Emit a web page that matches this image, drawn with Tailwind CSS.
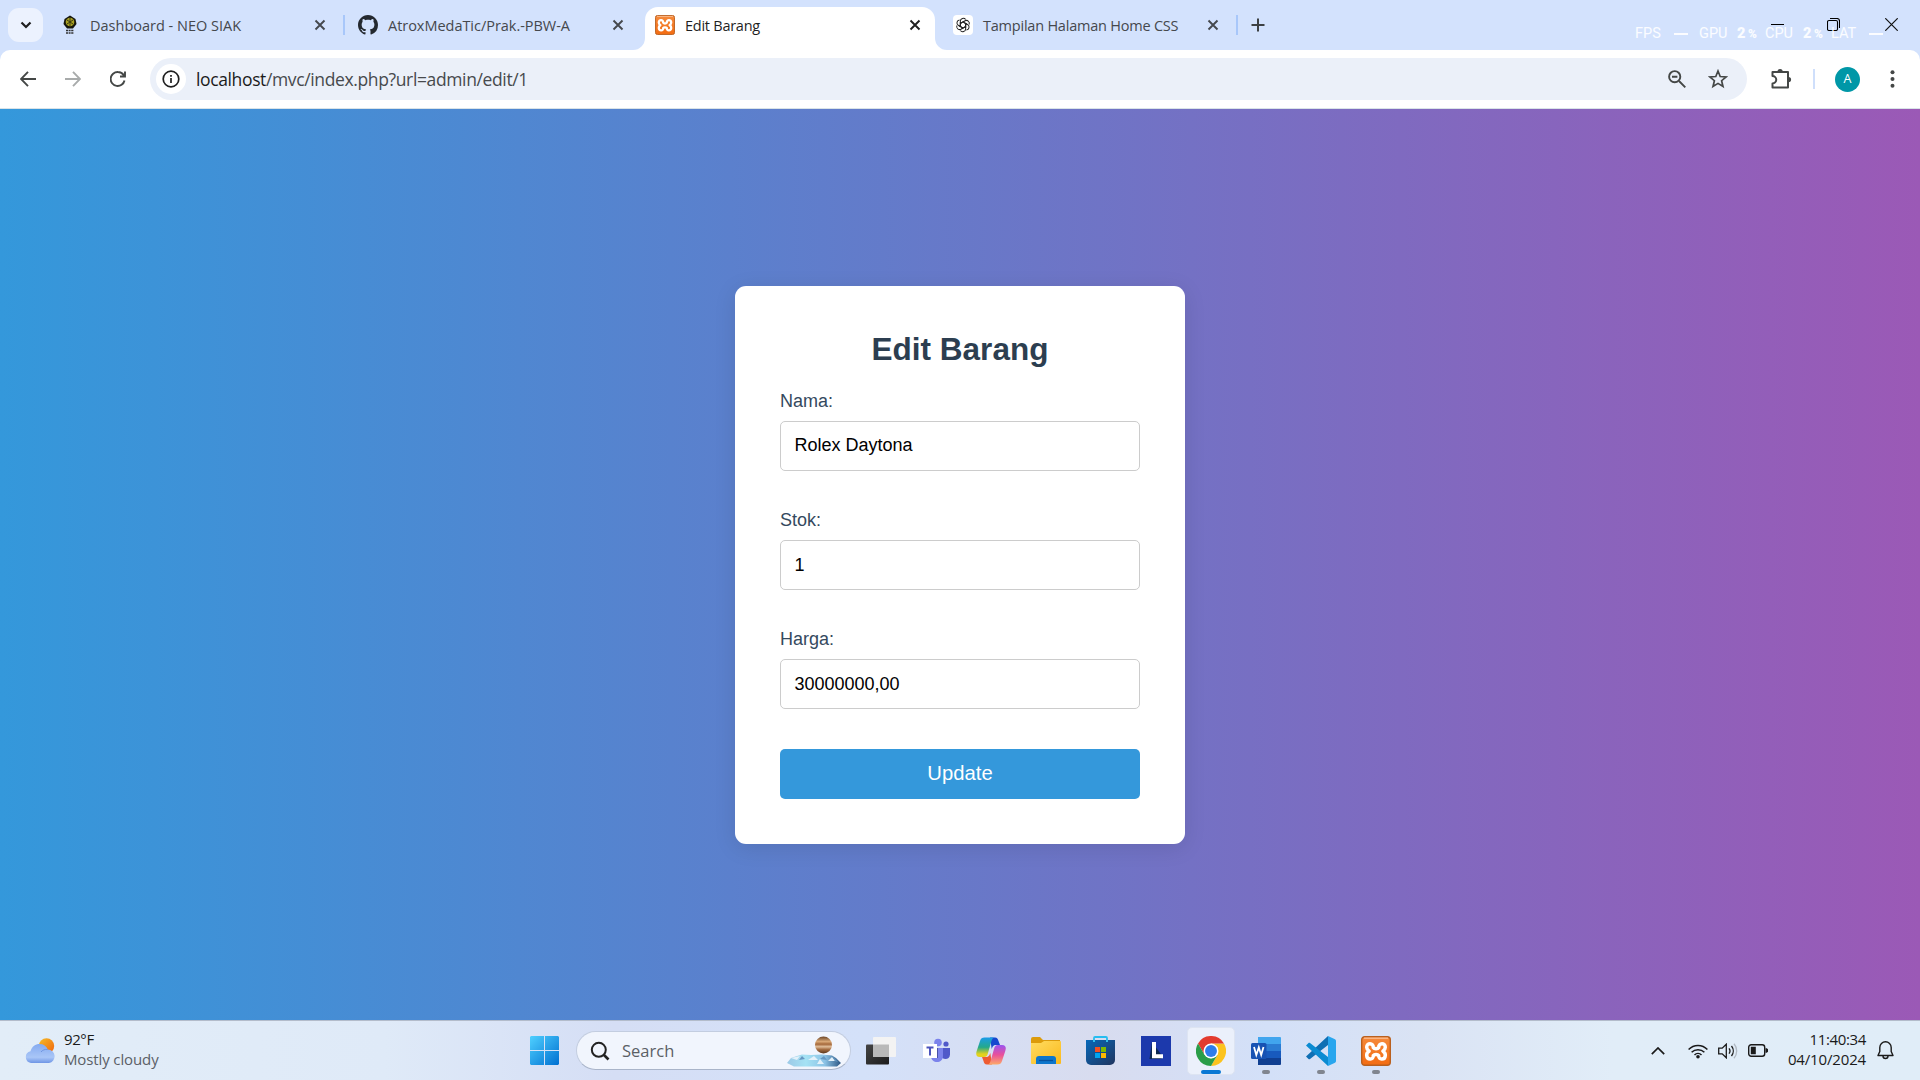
<!DOCTYPE html>
<html lang="id">
<head>
<meta charset="utf-8">
<title>Edit Barang</title>
<script src="https://cdn.jsdelivr.net/npm/@tailwindcss/browser@4"></script>
</head>
<body class="w-[1920px] h-[1080px] overflow-hidden flex flex-col font-['Open_Sans','Noto_Sans',sans-serif] bg-[#d3e2fd]">

<!-- shared symbols -->
<svg class="absolute w-0 h-0">
  <defs><linearGradient id="xg" x1="0" y1="0" x2="0" y2="1"><stop offset="0" stop-color="#f58a3c"/><stop offset="1" stop-color="#f36c12"/></linearGradient></defs>
  <symbol id="x" viewBox="0 0 12 12"><path d="M1.5 1.5l9 9M10.5 1.5l-9 9" stroke="currentColor" stroke-width="1.9" fill="none"/></symbol>
  <symbol id="xampp" viewBox="0 0 30 30">
    <rect x=".7" y=".7" width="28.6" height="28.6" rx="3" fill="url(#xg)" stroke="#b9601f" stroke-width="1.4"/>
    <path d="M3 2.200h24" stroke="#fbb98a" stroke-width="1.400"/>
    <path d="M12.300 11.500C12.500 6.500 5.700 6.500 5.700 11.200c0 2 1 3 2.400 4C6.300 16.200 5.500 17.500 5.700 19.500c.4 5 7.100 4.500 6.600 0 1-1.300 4.400-1.300 5.400 0-.5 4.500 6.200 5 6.600 0 .2-2-.6-3.300-2.400-4.300 1.400-1 2.400-2 2.400-4 0-4.700-6.800-4.700-6.600.3-1 1.600-4.400 1.600-5.400 0z" fill="none" stroke="#fff" stroke-width="3.500" stroke-linejoin="round"/>
  </symbol>
</svg>

<!-- tab strip -->
<header class="h-[50px] shrink-0 flex items-start relative text-[14.5px] text-[#45484d]">
  <div class="ml-2 mt-2 w-[35px] h-[34px] rounded-[11px] bg-[#ecf2fe] flex items-center justify-center shrink-0">
    <svg class="w-3 h-3" viewBox="0 0 12 12"><path d="M1.500 3.500L6 8l4.500-4.500" fill="none" stroke="#1f1f1f" stroke-width="2.200"/></svg>
  </div>
  <div class="w-[302px] h-[50px] pl-[17px] pr-[19px] flex items-center shrink-0">
    <svg class="w-5 h-5" viewBox="0 0 20 20"><path d="M10 .5l5.500 3.500 1 5-3.500 4.500H7L3.500 9l1-5z" fill="#15150c"/><circle cx="10" cy="7" r="4.300" fill="#a8a021"/><path d="M10 3v8M7 5l6 4M13 5L7 9" stroke="#39380f"/><path d="M6 15.500h8M6 18h8" stroke="#333" stroke-width="1.600" stroke-dasharray="2 .6"/></svg>
    <span class="ml-[10px] w-[151px] whitespace-nowrap pt-[2px]">Dashboard - NEO SIAK</span>
    <svg class="ml-auto w-3 h-3"><use href="#x"/></svg>
  </div>
  <div class="w-[2px] h-5 mt-[15px] -ml-[2px] bg-[#a8c7fa] shrink-0"></div>
  <div class="w-[300px] h-[50px] pl-[13px] pr-[21px] flex items-center shrink-0">
    <svg class="w-5 h-5" viewBox="0 0 16 16"><path fill="#24292f" d="M8 0C3.580 0 0 3.580 0 8c0 3.540 2.290 6.530 5.470 7.590.4.070.55-.17.55-.38 0-.19-.01-.82-.01-1.490-2.010.37-2.530-.49-2.690-.94-.09-.23-.48-.94-.82-1.130-.28-.15-.68-.52-.01-.53.63-.01 1.080.58 1.230.82.72 1.210 1.870.87 2.330.66.070-.52.28-.87.51-1.070-1.780-.2-3.640-.89-3.640-3.950 0-.87.31-1.590.82-2.150-.08-.2-.36-1.020.08-2.120 0 0 .67-.21 2.200.82.64-.18 1.320-.27 2-.27s1.360.09 2 .27c1.530-1.040 2.200-.82 2.200-.82.44 1.100.16 1.920.08 2.120.51.56.82 1.270.82 2.150 0 3.070-1.870 3.750-3.650 3.950.29.25.54.73.54 1.480 0 1.070-.01 1.930-.01 2.200 0 .21.15.46.55.38A8.010 8.010 0 0016 8c0-4.420-3.580-8-8-8z"/></svg>
    <span class="ml-[10px] whitespace-nowrap pt-[2px] tracking-[-0.03px]">AtroxMedaTic/Prak.-PBW-A</span>
    <svg class="ml-auto w-3 h-3"><use href="#x"/></svg>
  </div>
  <div class="w-[290px] h-[43px] mt-[7px] rounded-t-[13px] bg-white pl-[10px] pr-[14px] flex items-center pb-[7px] relative shrink-0 text-[#1f1f1f]">
    <svg class="absolute -left-3 bottom-0 w-3 h-3" viewBox="0 0 12 12"><path d="M12 0v12H0A12 12 0 0012 0z" fill="#fff"/></svg>
    <svg class="absolute -right-3 bottom-0 w-3 h-3" viewBox="0 0 12 12"><path d="M0 0v12h12A12 12 0 010 0z" fill="#fff"/></svg>
    <svg class="w-5 h-5"><use href="#xampp"/></svg>
    <span class="ml-[10px] whitespace-nowrap pt-[2px] tracking-[-0.250px]">Edit Barang</span>
    <svg class="ml-auto w-3 h-3"><use href="#x"/></svg>
  </div>
  <div class="w-[301px] h-[50px] pl-[18px] pr-[17px] flex items-center shrink-0">
    <svg class="w-5 h-5" viewBox="0 0 20 20"><rect width="20" height="20" rx="4" fill="#fff"/><g transform="translate(1.200 1.200) scale(.88)" fill="none" stroke="#222" stroke-width="1.150"><path id="k" d="M7 8.300V5.500a3.300 3.300 0 016-1.700M7 8.300l3-1.800 4.500 2.600"/><use href="#k" transform="rotate(60 10 10)"/><use href="#k" transform="rotate(120 10 10)"/><use href="#k" transform="rotate(180 10 10)"/><use href="#k" transform="rotate(240 10 10)"/><use href="#k" transform="rotate(300 10 10)"/></g></svg>
    <span class="ml-[10px] whitespace-nowrap pt-[2px] tracking-[-0.220px]">Tampilan Halaman Home CSS</span>
    <svg class="ml-auto w-3 h-3"><use href="#x"/></svg>
  </div>
  <div class="w-[2px] h-5 mt-[15px] bg-[#a8c7fa] shrink-0"></div>
  <svg class="w-[14px] h-[14px] mt-[18px] ml-[13px]" viewBox="0 0 14 14"><path d="M7 .5v13M.5 7h13" stroke="#3c4043" stroke-width="2"/></svg>
  <div class="ml-auto h-[49px] flex items-center shrink-0 text-black pr-[22px]">
    <svg class="w-[13px] h-[13px]" viewBox="0 0 13 13"><path d="M0 6.500h13" stroke="#000"/></svg>
    <svg class="w-[13px] h-[13px] ml-[43px]" viewBox="0 0 13 13"><path d="M.5 4a1.500 1.500 0 011.500-1.500h7A1.500 1.500 0 0110.500 4v7A1.500 1.500 0 019 12.500H2A1.500 1.500 0 01.5 11zM3 .5h7a2.500 2.500 0 012.500 2.500v7" fill="none" stroke="#000" stroke-width="1.100"/></svg>
    <svg class="w-[13px] h-[13px] ml-[45px]" viewBox="0 0 13 13"><path d="M.3.3l12.400 12.400M12.700.3L.3 12.700" stroke="#111" stroke-width="1.200"/></svg>
  </div>
  <!-- performance overlay -->
  <div class="absolute left-[1635px] top-[25px] w-[250px] h-[18px] leading-[18px] flex items-center whitespace-nowrap text-white/90 text-[14.500px] font-['Roboto',sans-serif]">
    <span class="w-[39px]">FPS</span><span class="w-[14px] h-[2px] bg-white/90 mr-[11px]"></span>
    <span class="w-[38px]">GPU</span><span class="w-[28px] font-black">2 <span class="text-[12px] -ml-px">%</span></span>
    <span class="w-[38px]">CPU</span><span class="w-[28px] font-black">2 <span class="text-[12px] -ml-px">%</span></span>
    <span class="w-[38px]">LAT</span><span class="w-[14px] h-[2px] bg-white/90"></span>
  </div>
</header>

<!-- toolbar -->
<div class="h-[59px] shrink-0 bg-white rounded-t-[10px] border-b border-[#d9e3e8] flex items-center">
  <svg class="ml-5 w-4 h-4" viewBox="0 0 16 16"><path d="M8 .8L1 8l7 7.200M1 8h15" fill="none" stroke="#444746" stroke-width="1.900"/></svg>
  <svg class="ml-[29px] w-4 h-4" viewBox="0 0 16 16"><path d="M8 .8L15 8l-7 7.200M15 8H0" fill="none" stroke="#a8abab" stroke-width="1.900"/></svg>
  <svg class="ml-[29px] w-4 h-4" viewBox="0 0 16 16"><path d="M14.500 9.500A7 7 0 118 1a7 7 0 015.800 3.200M15 .5v5h-5" fill="none" stroke="#444746" stroke-width="1.900"/></svg>
  <div class="ml-[24px] w-[1597px] h-[42px] rounded-full bg-[#ebf0f9] flex items-center pl-[6px] pr-[19px]">
    <div class="w-[30px] h-[30px] rounded-full bg-white flex items-center justify-center">
      <svg class="w-[18px] h-[18px]" viewBox="0 0 18 18"><circle cx="9" cy="9" r="7.800" fill="none" stroke="#1f1f1f" stroke-width="1.700"/><path d="M9 8v5M9 5v1.700" stroke="#1f1f1f" stroke-width="1.700"/></svg>
    </div>
    <span class="ml-[10px] text-[17.500px] tracking-[-0.370px] text-[#474a4d] whitespace-nowrap pt-px"><span class="text-[#1b1b1b]">localhost</span>/mvc/index.php?url=admin/edit/1</span>
    <svg class="ml-auto w-[18px] h-[18px]" viewBox="0 0 18 18"><circle cx="6.700" cy="6.700" r="5.600" fill="none" stroke="#444746" stroke-width="1.900"/><path d="M11 11l6.300 6.300M4 6.700h5.400" stroke="#444746" stroke-width="1.900"/></svg>
    <svg class="ml-[22px] w-5 h-5" viewBox="0 0 20 20"><path d="M10 2l2.200 5.500 5.900.4-4.500 3.800 1.400 5.800-5-3.100-5 3.100 1.400-5.800L1.900 7.900l5.900-.4z" fill="none" stroke="#444746" stroke-width="1.700"/></svg>
  </div>
  <svg class="ml-[23px] w-[22px] h-[22px]" viewBox="0 0 22 22"><path d="M2.500 4h15.500v15.500H2.500v-4a3.200 3.200 0 000-7.500z" fill="none" stroke="#444746" stroke-width="2" stroke-linejoin="round"/><path d="M7.500 3.500a2.600 2.600 0 015.200 0zM18.500 9a2.600 2.600 0 010 5.200z" fill="#444746"/></svg>
  <div class="ml-[21px] w-[2px] h-5 bg-[#cfdffb]"></div>
  <div class="ml-5 w-[25px] h-[25px] rounded-full bg-[#0097a7] text-white text-[12.500px] flex items-center justify-center">A</div>
  <svg class="ml-[30px] w-[5px] h-[18px]" viewBox="0 0 5 18"><g fill="#444746"><circle cx="2.500" cy="2.200" r="2"/><circle cx="2.500" cy="9" r="2"/><circle cx="2.500" cy="15.800" r="2"/></g></svg>
</div>

<!-- page -->
<main class="h-[911px] shrink-0 bg-linear-[90deg,#3498db,#9b59b6] flex justify-center items-start font-['Liberation_Sans',Arial,sans-serif]">
  <form class="mt-[177px] w-[450px] h-[558px] rounded-[11px] bg-white p-[45px] shadow-[0_4px_22px_rgba(0,0,0,0.1)] flex flex-col text-lg text-[#34495e]">
    <h1 class="h-9 leading-9 text-[31.500px] font-bold text-[#2c3e50] text-center">Edit Barang</h1>
    <label class="mt-[22px] h-6 leading-6">Nama:</label>
    <div class="mt-2 h-[50px] rounded-[5px] border border-[#ccc] px-[13.500px] leading-[46px] text-black">Rolex Daytona</div>
    <label class="mt-[37px] h-6 leading-6">Stok:</label>
    <div class="mt-2 h-[50px] rounded-[5px] border border-[#ccc] px-[13.500px] leading-[48px] text-black">1</div>
    <label class="mt-[37px] h-6 leading-6">Harga:</label>
    <div class="mt-2 h-[50px] rounded-[5px] border border-[#ccc] px-[13.500px] leading-[48px] text-black">30000000,00</div>
    <button type="button" class="mt-10 h-[50px] rounded-[5px] bg-[#3498db] text-white text-[20.250px] leading-[48px] pb-[2px]">Update</button>
  </form>
</main>

<!-- taskbar -->
<footer class="h-[60px] shrink-0 border-t border-[#b3bccb] bg-linear-[90deg,#e2edf8_0%,#dfeaf8_20%,#d5def5_32%,#d4e1f9_45%,#d8dcef_57%,#d3e0f8_66%,#dae3f4_74%,#e1edf8_84%,#e0edf8_100%] flex items-center">
  <div class="w-[528px] pl-[25px] flex items-center shrink-0">
    <svg class="w-[30px] h-[26px]" viewBox="0 0 30 26">
      <defs><linearGradient id="sun" x1="0" y1="0" x2="1" y2="1"><stop offset="0" stop-color="#f5bd28"/><stop offset="1" stop-color="#f0620c"/></linearGradient><linearGradient id="cl" x1="0" y1="0" x2="0" y2="1"><stop offset="0" stop-color="#85aaf0"/><stop offset=".7" stop-color="#a9c6f7"/><stop offset="1" stop-color="#6e95e5"/></linearGradient></defs>
      <circle cx="21.500" cy="8" r="7.700" fill="url(#sun)"/><path d="M6 25a6 6 0 01-.5-11.800C7 8.500 10.500 6 14.500 6c4 0 7 2 8.300 5.500A6.800 6.800 0 0124 25z" fill="url(#cl)"/><path d="M16 14c1.500-2 4-3 6.800-2.500" fill="none" stroke="#7096e0"/>
    </svg>
    <div class="ml-[9px] pb-1 text-[15px] leading-5 whitespace-nowrap"><div class="text-[#1a1a1a] tracking-[-0.400px]">92°F</div><div class="text-[#5b6067] tracking-[-0.120px]">Mostly cloudy</div></div>
  </div>
  <svg class="ml-[2px] w-[29px] h-[29px] shrink-0" viewBox="0 0 29 29"><defs><linearGradient id="w" x1="0" y1="0" x2="1" y2="1"><stop offset="0" stop-color="#4fd0ff"/><stop offset="1" stop-color="#0070d1"/></linearGradient></defs><path d="M1 0h13v14H0V1zM15 0h13l1 1v13H15zM0 15h14v14H1l-1-1zM15 15h14v13l-1 1H15z" fill="url(#w)"/></svg>
  <div class="ml-[17px] w-[275px] h-[39px] rounded-full bg-[#f1f5fd] border border-[#c3cde0] border-b-[#a9b4c9] flex items-center pl-[13px] pr-[8px] shrink-0">
    <svg class="w-5 h-5" viewBox="0 0 20 20"><circle cx="8.800" cy="8.800" r="7" fill="none" stroke="#222" stroke-width="2"/><path d="M14 14l4.500 4.500" stroke="#222" stroke-width="2.600"/></svg>
    <span class="ml-3 text-[16.500px] text-[#5b5f66] pt-px">Search</span>
    <svg class="ml-auto w-[56px] h-[34px]" viewBox="0 0 56 34">
      <defs><linearGradient id="pl" x1="0" y1="0" x2="0" y2="1"><stop offset="0" stop-color="#6a4426"/><stop offset=".3" stop-color="#d9a877"/><stop offset=".45" stop-color="#a5683a"/><stop offset=".6" stop-color="#dfbd9a"/><stop offset=".75" stop-color="#a87044"/><stop offset="1" stop-color="#59361d"/></linearGradient><linearGradient id="ice" x1="0" y1="0" x2="1" y2="0"><stop offset="0" stop-color="#9cc9e6"/><stop offset=".35" stop-color="#a5e2f4"/><stop offset=".7" stop-color="#8cc3e6"/><stop offset="1" stop-color="#2c5683"/></linearGradient></defs>
      <path d="M1 29l4-5 6-2 5-1.500 9 .5 11-.5 10 1 4 2.500 5 5-4 3.500H8z" fill="url(#ice)"/><path d="M5 24l6 2 3-4zM22 26l6-4 4 4zM31 30l3-5 4 5zM42 27l4-4 3 4z" fill="#e3f1fa"/><path d="M13 26l3-4 3 3zM34 25l4-3 3 4zM47 23l2 4 3 1z" fill="#6597c2"/>
      <circle cx="37.500" cy="11" r="8.500" fill="url(#pl)"/>
    </svg>
  </div>
  <div class="ml-[2px] flex h-full shrink-0">
    <div class="w-[55px] flex items-center justify-center">
      <svg class="w-[30px] h-[30px]" viewBox="0 0 30 30"><defs><linearGradient id="tv" x1="0" y1="0" x2="1" y2="1"><stop offset="0" stop-color="#444"/><stop offset="1" stop-color="#1c1c1c"/></linearGradient></defs><rect y="8.500" width="23" height="20" rx="1" fill="url(#tv)"/><rect x="7" y="1" width="23" height="20" rx="1" fill="#f3f3f3"/><path d="M7 8.500h16V21H7z" fill="#b9b9b9"/></svg>
    </div>
    <div class="w-[55px] flex items-center justify-center">
      <svg class="w-[28px] h-[26px]" viewBox="0 0 28 26"><circle cx="16" cy="4.500" r="3.800" fill="#7b83eb"/><circle cx="24" cy="6" r="2.600" fill="#5059c9"/><path d="M19 10h9v6.500c0 6-9 6-9 0z" fill="#5059c9"/><path d="M9 10h12v8c0 8-12 8-12 0z" fill="#7b83eb"/><path d="M9 10h7v10H9z" fill="#4a52a8"/><path d="M1 6h14v14H1z" fill="#fff"/><path d="M4.500 9.500h7M8 9.500v8" stroke="#4b53bc" stroke-width="2"/></svg>
    </div>
    <div class="w-[55px] flex items-center justify-center">
      <svg class="w-[30px] h-[28px]" viewBox="0 0 30 28"><defs><linearGradient id="c1" x1="0" y1="0" x2="0" y2="1"><stop offset="0" stop-color="#1b9be8"/><stop offset=".5" stop-color="#24a98a"/><stop offset=".85" stop-color="#e4d21c"/></linearGradient><linearGradient id="c2" x1="0" y1="0" x2="0" y2="1"><stop offset="0" stop-color="#9a55f0"/><stop offset=".5" stop-color="#e9509b"/><stop offset="1" stop-color="#fdaa68"/></linearGradient></defs><path d="M14 .5h5c2.200 0 2.800 1.500 3.500 3.500L24 8h-4c-3 0-3.500 2-4.300 4z" fill="#1647cf"/><path d="M16 27.500h-5c-2.500 0-2.800-1.500-3.500-3.500L6 20h4c3 0 3.500-2 4.300-4z" fill="#ee5b32"/><path d="M8.500.5H19c-2.500 0-3.200 2-4 5l-3 10.500c-.8 3-1.700 4-4 4H4c-4 0-4.300-3-3.300-6L4 4C5 1.300 6 .5 8.500.5z" fill="url(#c1)"/><path d="M21.500 27.500H11c2.500 0 3.200-2 4-5L18 12c.8-3 1.700-4 4-4h4c4 0 4.300 3 3.300 6L26 24c-1 2.700-2 3.500-4.500 3.500z" fill="url(#c2)"/></svg>
    </div>
    <div class="w-[55px] flex items-center justify-center">
      <svg class="w-[30px] h-[27px]" viewBox="0 0 30 27"><defs><linearGradient id="fo" x1="0" y1="0" x2="1" y2="1"><stop offset="0" stop-color="#ffdc62"/><stop offset="1" stop-color="#fbb91b"/></linearGradient></defs><path d="M0 2a2 2 0 012-2h7l3 3h17v8H0z" fill="#dc9b0b"/><path d="M0 6h10l3-2h16a1 1 0 011 1v21a1 1 0 01-1 1H1a1 1 0 01-1-1z" fill="url(#fo)"/><path d="M5 27v-5a3 3 0 013-3h14a3 3 0 013 3v5z" fill="#0d76cc"/><path d="M8 23.500h14" stroke="#07529d" stroke-width="1.300"/></svg>
    </div>
    <div class="w-[55px] flex items-center justify-center">
      <svg class="w-[29px] h-[29px]" viewBox="0 0 29 29"><defs><linearGradient id="st" x1="0" y1="0" x2="1" y2="1"><stop offset="0" stop-color="#0768b9"/><stop offset="1" stop-color="#21355f"/></linearGradient></defs><path d="M8 6V2a1 1 0 011-1h11a1 1 0 011 1v4" fill="none" stroke="#27bdf0" stroke-width="1.800"/><path d="M0 4h29v20a5 5 0 01-5 5H5a5 5 0 01-5-5z" fill="url(#st)"/><path d="M8 4v2M21 4v2" stroke="#35c9f6" stroke-width="1.800"/><path d="M9 11h5v5H9z" fill="#f25022"/><path d="M15 11h5v5h-5z" fill="#7fba00"/><path d="M9 17h5v5H9z" fill="#00a4ef"/><path d="M15 17h5v5h-5z" fill="#ffb900"/></svg>
    </div>
    <div class="w-[55px] flex items-center justify-center">
      <svg class="w-[30px] h-[30px]" viewBox="0 0 30 30"><path d="M0 0h30v30H0z" fill="#1c39ac"/><path d="M11 6l-2.500 17H20l2-2z" fill="#0b2850"/><path d="M13 6v14.200h9" fill="none" stroke="#fff" stroke-width="4"/></svg>
    </div>
    <div class="w-[55px] flex items-center justify-center">
      <div class="w-12 h-12 rounded-[5px] bg-[#ebf0fb] border border-[#dde4f2] relative flex items-center justify-center">
        <svg class="w-[30px] h-[30px]" viewBox="0 0 48 48"><path d="M44.800 12A24 24 0 0124 48l10.400-18L34.400 18 24 12z" fill="#fcc31e"/><path d="M3.200 12A24 24 0 0144.800 12H24L13.600 30z" fill="#e33b2e"/><path d="M3.200 12L13.600 30 24 36l10.400-6L24 48A24 24 0 013.200 12z" fill="#2a9d48"/><circle cx="24" cy="24" r="12" fill="#fff"/><circle cx="24" cy="24" r="9.500" fill="#2f7de9"/></svg>
        <div class="absolute left-[13px] bottom-0 w-5 h-1 rounded-full bg-[#0a78d4]"></div>
      </div>
    </div>
    <div class="w-[55px] flex items-center justify-center relative">
      <svg class="w-[30px] h-[28px]" viewBox="0 0 30 28"><path d="M7 0h22a1 1 0 011 1v6H7z" fill="#41a5ee"/><path d="M7 7h23v7H7z" fill="#2b7cd3"/><path d="M7 14h23v7H7z" fill="#185abd"/><path d="M7 21h23v6a1 1 0 01-1 1H7z" fill="#103f91"/><rect y="6" width="15.500" height="16" rx="1.500" fill="#1752b3"/><path d="M3 10l2.300 8L7.800 10.500 10.200 18l2.300-8" fill="none" stroke="#fff" stroke-width="1.800"/></svg>
      <div class="absolute left-[24px] bottom-[6px] w-2 h-1 rounded-full bg-[#80858f]"></div>
    </div>
    <div class="w-[55px] flex items-center justify-center relative">
      <svg class="w-[30px] h-[30px]" viewBox="0 0 30 30"><path d="M22 0L0 20.500 2.500 23c.5.400 1 .4 1.500 0L22 9z" fill="#0f6fb4"/><path d="M22 30L0 9.500 2.500 7c.5-.4 1-.4 1.500 0L22 21z" fill="#0b8bd2"/><path d="M22 0l7 3.300a2 2 0 011 1.700v20a2 2 0 01-1 1.700L22 30z" fill="#29a6ee"/></svg>
      <div class="absolute left-[24px] bottom-[6px] w-2 h-1 rounded-full bg-[#80858f]"></div>
    </div>
    <div class="w-[55px] flex items-center justify-center relative">
      <svg class="w-[30px] h-[30px]"><use href="#xampp"/></svg>
      <div class="absolute left-[24px] bottom-[6px] w-2 h-1 rounded-full bg-[#80858f]"></div>
    </div>
  </div>
  <div class="ml-auto pr-[26px] flex items-center shrink-0">
    <svg class="w-[14px] h-2" viewBox="0 0 14 8"><path d="M.8 7.200L7 1l6.200 6.200" fill="none" stroke="#1a1a1a" stroke-width="1.700"/></svg>
    <svg class="ml-[23px] w-5 h-4" viewBox="0 0 20 16"><g fill="none" stroke="#1a1a1a" stroke-width="1.500"><path d="M.6 6.500a13 13 0 0118.800 0M3.600 9.300a9 9 0 0112.800 0M6.500 12a5 5 0 017 0"/></g><circle cx="10" cy="13.700" r="1.800" fill="#1a1a1a"/></svg>
    <svg class="ml-[10px] w-5 h-4" viewBox="0 0 20 16"><path d="M.7 5.200h3.500L8.300 1.200v13.600L4.200 10.800H.7zM11 5.300a4.500 4.500 0 010 5.400M13.500 3a8 8 0 010 10" fill="none" stroke="#1a1a1a" stroke-width="1.300"/><path d="M16 .8a11 11 0 010 14.400" fill="none" stroke="#b2bac3" stroke-width="1.300"/></svg>
    <svg class="ml-[10px] w-5 h-[13px]" viewBox="0 0 20 13"><rect x=".7" y=".7" width="16" height="11.600" rx="2.500" fill="none" stroke="#1a1a1a" stroke-width="1.400"/><path d="M2.800 2.800h5v7.400h-5zM17.500 4.300h1.300l1.200 1v2.400l-1.200 1h-1.300z" fill="#1a1a1a"/></svg>
    <div class="ml-[20px] w-[78px] pb-1 text-right text-[15px] leading-5 text-[#1a1a1a] whitespace-nowrap flex flex-col items-end"><span class="tracking-[-0.350px]">11:40:34</span><span class="tracking-[-0.150px]">04/10/2024</span></div>
    <svg class="ml-[11px] w-[17px] h-[19px]" viewBox="0 0 17 19"><path d="M8.500.8a5.700 5.700 0 00-5.700 5.700v4L1 14.500h15l-1.800-4v-4A5.700 5.700 0 008.500.8z" fill="none" stroke="#1a1a1a" stroke-width="1.400" stroke-linejoin="round"/><path d="M6 15a2.500 2.500 0 005 0" fill="none" stroke="#1a1a1a" stroke-width="1.400"/></svg>
  </div>
</footer>
</body>
</html>
